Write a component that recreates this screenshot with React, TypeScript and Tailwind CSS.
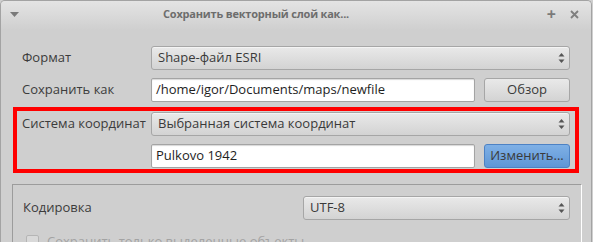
import React from "react";

const font = { fontFamily: '"Open Sans", "Noto Sans", sans-serif' };

function Arrows() {
  return (
    <svg width="7" height="12" viewBox="0 0 7 12" className="shrink-0">
      <path d="M3.5 1 L6.5 4.5 L0.5 4.5 Z" fill="#555" />
      <path d="M3.5 11 L6.5 7.5 L0.5 7.5 Z" fill="#555" />
    </svg>
  );
}

function Combo({ text, className = "" }: { text: string; className?: string }) {
  return (
    <div
      className={
        "h-[24px] flex items-center justify-between pl-[6px] pr-[4px] rounded-[3px] border border-[#a6a6a6] bg-gradient-to-b from-[#e9e9e9] to-[#d3d3d3] text-[13px] text-[#3a3a3a] shadow-[inset_0_1px_0_#f4f4f4] " +
        className
      }
    >
      <span>{text}</span>
      <Arrows />
    </div>
  );
}

function Input({ text }: { text: string }) {
  return (
    <div className="flex-1 h-[24px] flex items-center px-[4px] rounded-[2px] border border-[#a4a4a4] bg-white text-[13px] text-[#1e1e1e] shadow-[inset_0_1px_1px_#d8d8d8]">
      {text}
    </div>
  );
}

function Button({ text, blue }: { text: string; blue?: boolean }) {
  return (
    <div
      className={
        "w-[86px] h-[24px] flex items-center justify-center rounded-[3px] border text-[13px] text-[#3a3a3a] " +
        (blue
          ? "border-[#4d82c4] bg-gradient-to-b from-[#7fb0e6] to-[#5f97d6]"
          : "border-[#a6a6a6] bg-gradient-to-b from-[#e9e9e9] to-[#d3d3d3]")
      }
    >
      {text}
    </div>
  );
}

export default function App() {
  return (
    <div className="w-[593px] h-[242px] overflow-hidden bg-[#cfcfcf]" style={font}>
      <div className="relative w-[592px] h-[242px] border border-b-0 border-[#a3a3a3] rounded-t-[5px] bg-[#cfcfcf] overflow-hidden">
        {/* title bar */}
        <div className="h-[29px] flex items-center px-[9px] bg-gradient-to-b from-[#e4e4e4] to-[#cfcfcf]">
          <svg width="9" height="6" viewBox="0 0 9 6" className="mt-[-2px]">
            <path d="M0 0 L9 0 L4.5 5 Z" fill="#7a7a7a" />
          </svg>
          <div className="flex-1 pl-[144px] text-[11px] font-bold text-[#6d6d6d] tracking-[-0.2px] mt-[-3px]">
            Сохранить векторный слой как...
          </div>
          <div className="flex items-center gap-[14px] mt-[-3px] pr-[3px]">
            <span className="text-[16px] font-bold text-[#7a7a7a] leading-none">+</span>
            <svg width="9" height="9" viewBox="0 0 9 9">
              <path d="M1 1 L8 8 M8 1 L1 8" stroke="#7f7f7f" strokeWidth="1.8" />
            </svg>
          </div>
        </div>

        {/* form */}
        <div className="pt-[16px] pl-[21px] pr-[21px] text-[13px] text-[#3c3c3c]">
          <div className="flex items-center">
            <div className="w-[129px]">Формат</div>
            <Combo text="Shape-файл ESRI" className="flex-1" />
          </div>
          <div className="flex items-center mt-[8px] gap-[9px]">
            <div className="w-[120px]">Сохранить как</div>
            <Input text="/home/igor/Documents/maps/newfile" />
            <Button text="Обзор" />
          </div>
          <div className="flex items-center mt-[10px]">
            <div className="w-[129px]">Система координат</div>
            <Combo text="Выбранная система координат" className="flex-1" />
          </div>
          <div className="flex items-center mt-[8px] gap-[9px]">
            <div className="w-[120px]" />
            <Input text="Pulkovo 1942" />
            <Button text="Изменить..." blue />
          </div>
        </div>

        {/* options group */}
        <div className="mt-[16px] ml-[11px] w-[570px] h-[80px] border-t border-l border-t-[#9c9c9c] border-l-[#9c9c9c] border-r border-r-white pt-[11px] pl-[10px] pr-[11px]">
          <div className="flex items-center text-[13px] text-[#3c3c3c]">
            <div className="w-[280px]">Кодировка</div>
            <Combo text="UTF-8" className="flex-1" />
          </div>
          <div className="flex items-center mt-[12px] ml-[3px] gap-[8px] text-[13px] text-[#a3a3a3]">
            <div className="w-[13px] h-[13px] rounded-[2px] border border-[#b5b5b5] bg-[#d9d9d9]" />
            <span>Сохранить только выделенные объекты</span>
          </div>
        </div>

        {/* annotation */}
        <div className="absolute left-[12px] top-[106px] w-[566px] h-[66px] border-[4px] border-[#ff0000] pointer-events-none" />
      </div>
    </div>
  );
}
